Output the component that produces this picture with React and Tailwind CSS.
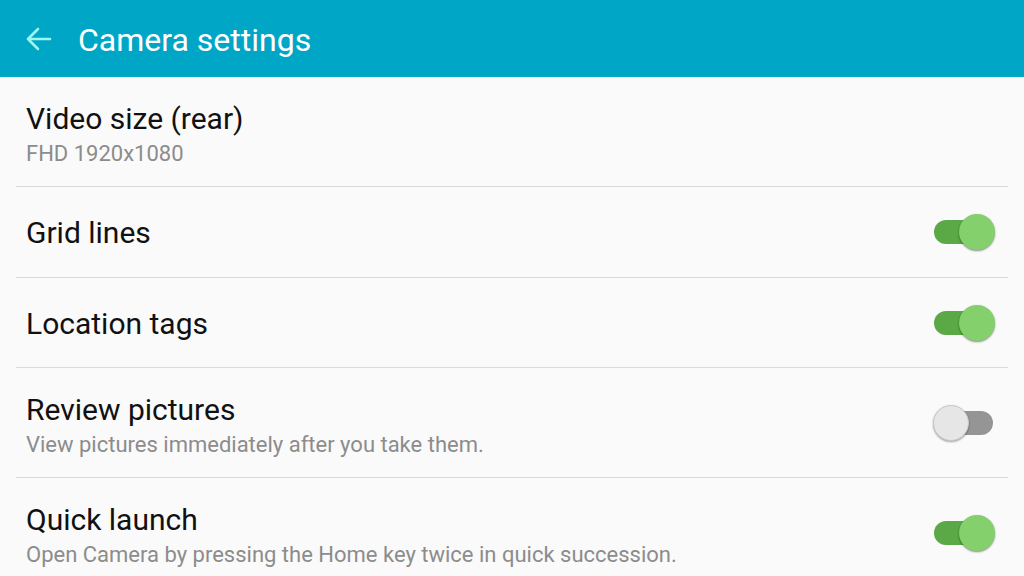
import React from "react";

const rows = [
  { title: "Video size (rear)", sub: "FHD 1920x1080", h: "h-[110px]" },
  { title: "Grid lines", toggle: true, on: true, h: "h-[91px]" },
  { title: "Location tags", toggle: true, on: true, h: "h-[90px]" },
  { title: "Review pictures", sub: "View pictures immediately after you take them.", toggle: true, on: false, h: "h-[110px]" },
  { title: "Quick launch", sub: "Open Camera by pressing the Home key twice in quick succession.", toggle: true, on: true, h: "h-[110px]" },
];

const Toggle = ({ on }) => (
  <div className="relative w-[62px] h-[36px] flex items-center">
    <div className={`ml-[1px] w-[59px] h-[24px] rounded-full ${on ? "bg-[#5aa846]" : "bg-[#959595]"}`} />
    {on ? (
      <div className="absolute right-0 top-0 w-[36px] h-[36px] rounded-full bg-[#84d06c] shadow-[0_1px_2px_rgba(0,0,0,0.45)]" />
    ) : (
      <div className="absolute left-0 top-0 w-[36px] h-[36px] rounded-full bg-[#e6e6e6] border border-[#c8c8c8] shadow-[0_1px_2px_rgba(0,0,0,0.35)]" />
    )}
  </div>
);

export default function App() {
  return (
    <div className="w-[1024px] h-[576px] overflow-hidden bg-[#fafafa] font-['Roboto',sans-serif]">
      {/* Header */}
      <div className="h-[77px] bg-[#00a6c6] flex items-center">
        <svg className="ml-[25px]" width="27" height="24" viewBox="0 0 27 24" fill="none">
          <path d="M25 12H3M13 2L3 12l10 10" stroke="#9ff5f0" strokeWidth="2.6" strokeLinecap="round" strokeLinejoin="round" />
        </svg>
        <h1 className="ml-[26px] text-[32px] text-white leading-none pt-[3px]">Camera settings</h1>
      </div>

      {/* Settings list */}
      <div className="px-4">
        {rows.map((r, i) => (
          <div
            key={i}
            className={`${r.h} flex items-center justify-between pl-[10px] pr-[13px] ${i < rows.length - 1 ? "border-b border-[#d9d9d9]" : ""}`}
          >
            <div className={`flex flex-col ${r.sub ? "gap-[6px] pt-[6px]" : "pt-[2px]"}`}>
              <p className="text-[30px] leading-[32px] text-[#111]">{r.title}</p>
              {r.sub && <p className="text-[22px] leading-[26px] text-[#8c8c8c]">{r.sub}</p>}
            </div>
            {r.toggle && <Toggle on={r.on} />}
          </div>
        ))}
      </div>
    </div>
  );
}
